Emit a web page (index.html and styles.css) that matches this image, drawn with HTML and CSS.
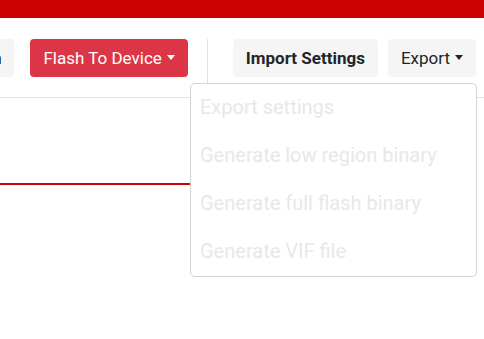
FILE: index.html
```html
<!DOCTYPE html>
<html lang="en">
<head>
    <meta charset="UTF-8">
    <meta name="viewport" content="width=device-width, initial-scale=1.0">
    <title>Device Configurator</title>
    <link rel="stylesheet" href="styles.css">
</head>
<body>
    <div class="top-bar"></div>

    <div class="toolbar">
        <button class="btn btn-light btn-bold">Save Configuration</button>
        <button class="btn btn-danger dropdown-toggle flash-btn">Flash To Device</button>
        <div class="separator"></div>
        <button class="btn btn-light btn-bold">Import Settings</button>
        <div class="dropdown">
            <button class="btn btn-light dropdown-toggle">Export</button>
            <div class="dropdown-menu">
                <a class="dropdown-item disabled">Export settings</a>
                <a class="dropdown-item disabled">Generate low region binary</a>
                <a class="dropdown-item disabled">Generate full flash binary</a>
                <a class="dropdown-item disabled">Generate VIF file</a>
            </div>
        </div>
    </div>

    <div class="content">
        <div class="tab-line"></div>
    </div>
</body>
</html>
```

FILE: styles.css
```css
:root {
    --brand-red: #cc0000;
    --danger: #dc3545;
    --light: #f5f5f5;
    --text-color: #212529;
    --border-color: #dee2e6;
}

* {
    margin: 0;
    padding: 0;
    box-sizing: border-box;
}

html, body {
    min-height: 100%;
}

body {
    font-family: Roboto, 'Liberation Sans', sans-serif;
    color: var(--text-color);
    background: white;
    min-height: 100vh;
}

.top-bar {
    height: 18px;
    background-color: var(--brand-red);
}

.toolbar {
    display: flex;
    justify-content: flex-end;
    align-items: center;
    padding: 21px 8px 20px 8px;
    border-bottom: 1px solid var(--border-color);
    white-space: nowrap;
}

.btn {
    font-family: Roboto, 'Liberation Sans', sans-serif;
    font-size: 17px;
    line-height: 26px;
    padding: 5px 12px;
    border: 1px solid transparent;
    border-radius: 4px;
    cursor: pointer;
    flex-shrink: 0;
}

.btn-light {
    background-color: var(--light);
    color: var(--text-color);
}

.btn-bold {
    font-weight: 700;
}

.btn-danger {
    background-color: var(--danger);
    color: white;
}

.flash-btn {
    margin-left: 16px;
}

.dropdown-toggle::after {
    content: '';
    display: inline-block;
    margin-left: 5px;
    vertical-align: 4px;
    border-top: 5px solid currentColor;
    border-left: 4.5px solid transparent;
    border-right: 4.5px solid transparent;
}

.separator {
    align-self: stretch;
    width: 1px;
    margin: 0 25px -20px 19px;
    background-color: var(--border-color);
    flex-shrink: 0;
}

.dropdown {
    position: relative;
    margin-left: 10px;
}

.dropdown-menu {
    position: absolute;
    top: 44px;
    right: -1px;
    width: 287px;
    background: white;
    border: 1px solid #d4d4d4;
    border-radius: 5px;
    z-index: 10;
}

.dropdown-item {
    display: block;
    height: 48px;
    padding: 9px 9px;
    font-size: 20px;
    line-height: 28px;
    color: #e6e8eb;
}

.content {
    padding-top: 85px;
}

.tab-line {
    width: 320px;
    height: 2px;
    background-color: var(--brand-red);
}
```
